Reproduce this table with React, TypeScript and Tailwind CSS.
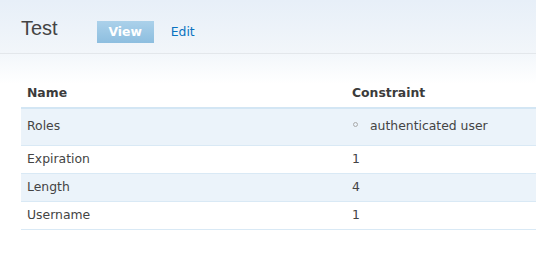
import React from 'react';

const rows = [
  { name: 'Roles', value: 'authenticated user', list: true },
  { name: 'Expiration', value: '1' },
  { name: 'Length', value: '4' },
  { name: 'Username', value: '1' },
];

export default function App() {
  return (
    <div className="h-[262px] w-[536px] overflow-hidden bg-white font-['DejaVu_Sans',Verdana,sans-serif] text-[12.4px] text-[#444]">
      <div className="flex h-[54px] items-start border-b border-[#e3e7eb] bg-gradient-to-b from-[#e7eff8] to-[#f2f6fa] pl-[21px]">
        <h1 className="mt-[16px] font-['Liberation_Sans',Arial,sans-serif] text-[20px] leading-[24px] text-[#444]">
          Test
        </h1>
        <div className="ml-[39px] mt-[21px] flex items-center">
          <span className="flex h-[22px] w-[57px] items-center justify-center bg-gradient-to-b from-[#abd1ea] to-[#8dbedf] font-bold text-white">
            View
          </span>
          <span className="ml-[17px] text-[#0a72c0]">Edit</span>
        </div>
      </div>
      <div className="bg-gradient-to-b from-[#f3f7fb] to-white to-[30px] pl-[21px] pt-[26px]">
        <table className="w-[515px] border-collapse">
          <thead>
            <tr className="border-b-2 border-[#d3e6f4]">
              <th className="h-[28px] w-[325px] pl-[6px] text-left font-bold text-[#3b3b3b]">Name</th>
              <th className="pl-[6px] text-left font-bold text-[#3b3b3b]">Constraint</th>
            </tr>
          </thead>
          <tbody>
            {rows.map((r, i) => (
              <tr key={r.name} className={`border-b border-[#d9e9f5] ${i % 2 === 0 ? 'bg-[#ebf3fa]' : 'bg-white'}`}>
                <td className={`pl-[6px] ${r.list ? 'h-[37px]' : 'h-[28px]'}`}>{r.name}</td>
                <td className="pl-[6px]">
                  {r.list ? (
                    <div className="flex items-center">
                      <span className="mb-[4px] ml-[1px] h-[5px] w-[5px] rounded-full border border-[#aaa]" />
                      <span className="ml-[12px]">{r.value}</span>
                    </div>
                  ) : (
                    r.value
                  )}
                </td>
              </tr>
            ))}
          </tbody>
        </table>
      </div>
    </div>
  );
}
